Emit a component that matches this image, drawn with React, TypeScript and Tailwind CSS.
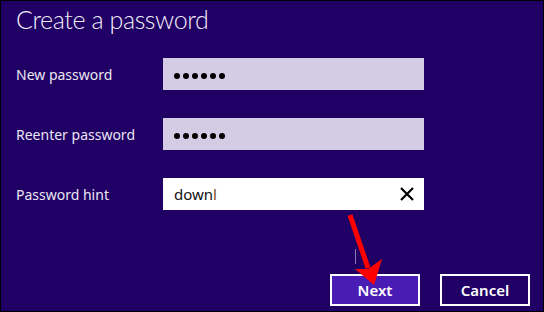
const fields = [
  { label: 'New password', kind: 'secret' },
  { label: 'Reenter password', kind: 'secret' },
  { label: 'Password hint', kind: 'hint' },
];

function Dots() {
  return (
    <div className="flex items-center gap-[3px] pt-[3px]">
      {[0, 1, 2, 3, 4, 5].map((i) => (
        <span key={i} className="block w-[6px] h-[6px] rounded-full bg-black" />
      ))}
    </div>
  );
}

export default function App() {
  return (
    <div
      className="relative w-[544px] h-[312px] bg-[#200064] border border-black overflow-hidden flex flex-col"
      style={{ fontFamily: '"Noto Sans", "Open Sans", sans-serif' }}
    >
      {/* Title */}
      <h1
        className="pl-[15px] pt-[1px] text-[25px] leading-[35px] font-light tracking-[-0.4px] text-[#f2eefa]"
        style={{ fontFamily: 'Lato, "Noto Sans", sans-serif' }}
      >
        Create a password
      </h1>

      {/* Form */}
      <div className="mt-[21px] flex flex-col gap-[28px] pl-[15px]">
        {fields.map((f) => (
          <div key={f.label} className="flex items-center">
            <div className="w-[147px] text-[14px] text-[#ebe6f5]">{f.label}</div>
            <div
              className={`w-[261px] h-[32px] flex items-center justify-between pl-[11px] pr-[9px] ${
                f.kind === 'hint' ? 'bg-white' : 'bg-[#d4cce4]'
              }`}
            >
              {f.kind === 'secret' ? (
                <Dots />
              ) : (
                <>
                  <span className="text-[15px] text-[#111] leading-none">
                    down<span className="text-[#7a4a10]">l</span>
                  </span>
                  <svg width="14" height="14" viewBox="0 0 14 14" className="mr-[1px]">
                    <path d="M1 1 L13 13 M13 1 L1 13" stroke="#000" strokeWidth="2.2" />
                  </svg>
                </>
              )}
            </div>
          </div>
        ))}
      </div>

      {/* Buttons */}
      <div className="mt-auto mb-[5px] flex justify-end gap-[20px] pr-[13px]">
        <button className="w-[90px] h-[32px] border-2 border-white bg-[#4a1cb6] text-white text-[15px] font-semibold">
          Next
        </button>
        <button className="w-[90px] h-[32px] border-2 border-white bg-[#200064] text-white text-[15px] font-semibold">
          Cancel
        </button>
      </div>

      {/* Red annotation arrow */}
      <svg className="absolute left-0 top-0 pointer-events-none" width="544" height="312" viewBox="0 0 544 312">
        <line x1="354.5" y1="248" x2="354.5" y2="263" stroke="#b9b0d6" strokeWidth="1" opacity="0.7" />
        <line x1="349" y1="214" x2="367" y2="267" stroke="#ff0000" strokeWidth="5" strokeLinecap="butt" />
        <polygon points="373,284 354,268 367,268 381,258" fill="#ff0000" />
      </svg>
    </div>
  );
}
